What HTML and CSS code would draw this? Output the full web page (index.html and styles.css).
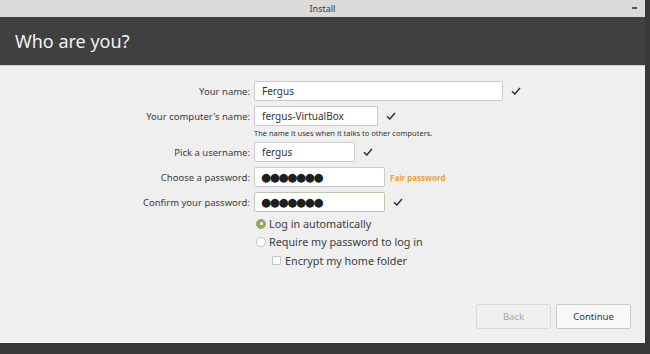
FILE: index.html
```html
<!DOCTYPE html>
<html lang="en">
<head>
<meta charset="UTF-8">
<title>Install</title>
<link rel="stylesheet" href="styles.css">
</head>
<body>

<div class="window">
  <div class="titlebar">
    <span class="title">Install</span>
    <span class="minimize"></span>
  </div>

  <div class="header">
    <h1>Who are you?</h1>
  </div>

  <div class="content">
    <div class="form">
      <label class="lbl">Your name:</label>
      <div class="field">
        <div class="input w-name">Fergus</div>
        <svg class="check" width="10" height="8" viewBox="0 0 10 8"><path d="M1 4.2 L3.8 7 L9 1" fill="none" stroke="#333" stroke-width="1.5"/></svg>
      </div>

      <label class="lbl">Your computer's name:</label>
      <div class="field">
        <div class="input w-host">fergus-VirtualBox</div>
        <svg class="check" width="10" height="8" viewBox="0 0 10 8"><path d="M1 4.2 L3.8 7 L9 1" fill="none" stroke="#333" stroke-width="1.5"/></svg>
      </div>

      <span></span>
      <div class="hint">The name it uses when it talks to other computers.</div>

      <label class="lbl">Pick a username:</label>
      <div class="field">
        <div class="input w-user">fergus</div>
        <svg class="check" width="10" height="8" viewBox="0 0 10 8"><path d="M1 4.2 L3.8 7 L9 1" fill="none" stroke="#333" stroke-width="1.5"/></svg>
      </div>

      <label class="lbl">Choose a password:</label>
      <div class="field">
        <div class="input w-pass dots">●●●●●●●</div>
        <span class="strength">Fair password</span>
      </div>

      <label class="lbl">Confirm your password:</label>
      <div class="field">
        <div class="input w-pass dots ok">●●●●●●●</div>
        <svg class="check" width="10" height="8" viewBox="0 0 10 8"><path d="M1 4.2 L3.8 7 L9 1" fill="none" stroke="#333" stroke-width="1.5"/></svg>
      </div>
    </div>

    <div class="options">
      <div class="opt"><span class="radio on"></span>Log in automatically</div>
      <div class="opt"><span class="radio"></span>Require my password to log in</div>
      <div class="opt sub"><span class="box"></span>Encrypt my home folder</div>
    </div>

    <div class="buttons">
      <button class="btn" disabled>Back</button>
      <button class="btn">Continue</button>
    </div>
  </div>
</div>

</body>
</html>
```

FILE: styles.css
```css
body {
  margin: 0;
  background: #383838;
  font-family: "Noto Sans", "Open Sans", sans-serif;
  color: #3c3c3c;
  width: 650px;
  height: 354px;
  overflow: hidden;
}
.window {
  width: 645px;
  display: flex;
  flex-direction: column;
}
.titlebar {
  height: 17px;
  background: #dadada;
  display: flex;
  align-items: center;
  justify-content: center;
  position: relative;
  font-size: 9px;
  color: #3a3a3a;
}
.minimize {
  position: absolute;
  right: 8px;
  top: 7px;
  width: 5px;
  height: 2px;
  background: #555;
}
.header {
  height: 48px;
  background: #404040;
  border-bottom: 1px solid #cfcfcf;
  display: flex;
  align-items: center;
  padding-left: 15px;
}
.header h1 {
  margin: 0;
  font-weight: normal;
  font-size: 18px;
  color: #f2f2f2;
}
.content {
  background: #efefef;
  border-bottom: 1px solid #fafafa;
  display: flex;
  flex-direction: column;
  padding-top: 15px;
  box-sizing: border-box;
  height: 277px;
}
.form {
  display: grid;
  grid-template-columns: 250px auto;
  column-gap: 4px;
  row-gap: 5px;
  align-items: center;
}
.lbl {
  text-align: right;
  font-size: 9.5px;
  color: #3c3c3c;
}
.field {
  display: flex;
  align-items: center;
}
.input {
  height: 20px;
  box-sizing: border-box;
  background: #fff;
  border: 1px solid #cbcbcb;
  border-radius: 2px;
  padding-left: 7px;
  font-size: 10px;
  line-height: 18px;
  color: #333;
}
.w-name { width: 249px; }
.w-host { width: 124px; }
.w-user { width: 101px; }
.w-pass { width: 131px; }
.dots {
  font-family: "DejaVu Sans", sans-serif;
  font-size: 11.5px;
  letter-spacing: -1.3px;
  color: #1e1e1e;
  padding-left: 6px;
}
.ok {
  border-color: #c2c8b0;
}
.check {
  margin-left: 8px;
}
.hint {
  font-size: 7.5px;
  color: #333;
  margin: -3px 0 -1px;
}
.strength {
  margin-left: 5px;
  font-size: 8px;
  font-weight: bold;
  color: #f0a230;
}
.options {
  margin-left: 256px;
  margin-top: 5px;
  display: flex;
  flex-direction: column;
  gap: 5px;
  font-size: 10.8px;
  color: #3c3c3c;
}
.opt {
  display: flex;
  align-items: center;
  height: 13px;
}
.opt.sub {
  margin-left: 16px;
  margin-top: 1px;
}
.radio {
  width: 10px;
  height: 10px;
  border-radius: 50%;
  border: 1px solid #c4c4c4;
  background: #fff;
  box-sizing: border-box;
  margin-right: 3px;
}
.radio.on {
  background: #8fa86a;
  border-color: #8fa86a;
  position: relative;
}
.radio.on::after {
  content: "";
  position: absolute;
  left: 2.5px;
  top: 2.5px;
  width: 3px;
  height: 3px;
  border-radius: 50%;
  background: #fff;
}
.box {
  width: 9px;
  height: 9px;
  border: 1px solid #c4c4c4;
  background: #fff;
  box-sizing: border-box;
  border-radius: 1px;
  margin-right: 4px;
}
.buttons {
  margin-top: auto;
  margin-bottom: 13px;
  margin-right: 14px;
  display: flex;
  justify-content: flex-end;
  gap: 5px;
}
.btn {
  width: 75px;
  height: 25px;
  font-family: inherit;
  font-size: 9.5px;
  color: #333;
  background: #f8f8f8;
  border: 1px solid #c9c9c9;
  border-radius: 2px;
}
.btn:disabled {
  color: #a8a8a8;
  background: #efefef;
  border-color: #dadada;
}
```
